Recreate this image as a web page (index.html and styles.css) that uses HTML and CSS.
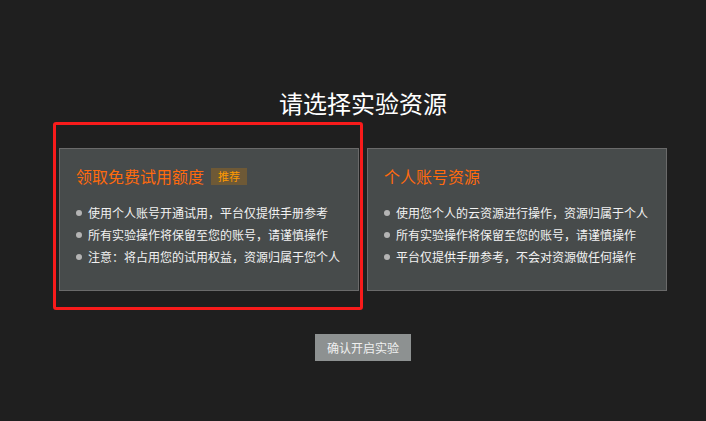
FILE: index.html
```html
<!DOCTYPE html>
<html lang="zh-CN">
<head>
    <meta charset="UTF-8">
    <meta name="viewport" content="width=device-width, initial-scale=1.0">
    <title>请选择实验资源</title>
    <link rel="stylesheet" href="styles.css">
</head>
<body>
    <div class="resource">
        <h1 class="resource__title">请选择实验资源</h1>

        <div class="resource__cards">
            <div class="resource__card is-selected">
                <h2 class="resource__card-title">
                    领取免费试用额度
                    <span class="resource__badge">推荐</span>
                </h2>
                <ul class="resource__list">
                    <li>使用个人账号开通试用，平台仅提供手册参考</li>
                    <li>所有实验操作将保留至您的账号，请谨慎操作</li>
                    <li>注意：将占用您的试用权益，资源归属于您个人</li>
                </ul>
            </div>
            <div class="resource__card">
                <h2 class="resource__card-title">个人账号资源</h2>
                <ul class="resource__list">
                    <li>使用您个人的云资源进行操作，资源归属于个人</li>
                    <li>所有实验操作将保留至您的账号，请谨慎操作</li>
                    <li>平台仅提供手册参考，不会对资源做任何操作</li>
                </ul>
            </div>
        </div>

        <button class="resource__button" type="button">确认开启实验</button>
    </div>
</body>
</html>
```

FILE: styles.css
```css
/* Page */
body {
    margin: 0;
    background: #1f1f1f;
    font-family: "Noto Sans CJK SC", "Noto Sans", sans-serif;
    color: #eeeeee;
}

/* Resource Picker */
.resource {
    display: flex;
    flex-direction: column;
    align-items: center;
    padding: 87px 0 0 20px;
}

.resource__title {
    margin: 0;
    font-size: 24px;
    line-height: 32px;
    font-weight: 400;
    color: #ffffff;
}

.resource__cards {
    display: flex;
    gap: 8px;
    margin-top: 29px;
}

/* Card */
.resource__card {
    position: relative;
    width: 300px;
    box-sizing: border-box;
    padding: 16px 16px 22px;
    background: #474b4b;
    border: 1px solid #6a6a6a;
}

/* Selection outline */
.resource__card.is-selected::after {
    content: "";
    position: absolute;
    left: -7px;
    top: -27px;
    right: -5px;
    bottom: -20px;
    border: 3px solid #f81b1b;
    border-radius: 3px;
    pointer-events: none;
}

.resource__card-title {
    display: flex;
    align-items: center;
    gap: 7px;
    margin: 0;
    height: 22px;
    font-size: 16px;
    font-weight: 400;
    color: #ff6a0d;
}

.resource__badge {
    display: inline-flex;
    align-items: center;
    justify-content: center;
    width: 36px;
    height: 17px;
    background: #6e5936;
    color: #ff9a00;
    font-size: 11px;
}

.resource__list {
    list-style: none;
    margin: 15px 0 0;
    padding: 0;
}

.resource__list li {
    display: flex;
    align-items: center;
    font-size: 12px;
    line-height: 22px;
    color: #f2f2f2;
    white-space: nowrap;

    &::before {
        content: "";
        width: 6px;
        height: 6px;
        margin-right: 6px;
        border-radius: 50%;
        background: #b4b4b4;
        flex-shrink: 0;
    }
}

/* Confirm Button */
.resource__button {
    margin-top: 43px;
    width: 96px;
    height: 27px;
    padding: 0;
    border: none;
    background: #8d9191;
    color: #f0f0f0;
    font-family: inherit;
    font-size: 12px;
    cursor: pointer;
}
```
